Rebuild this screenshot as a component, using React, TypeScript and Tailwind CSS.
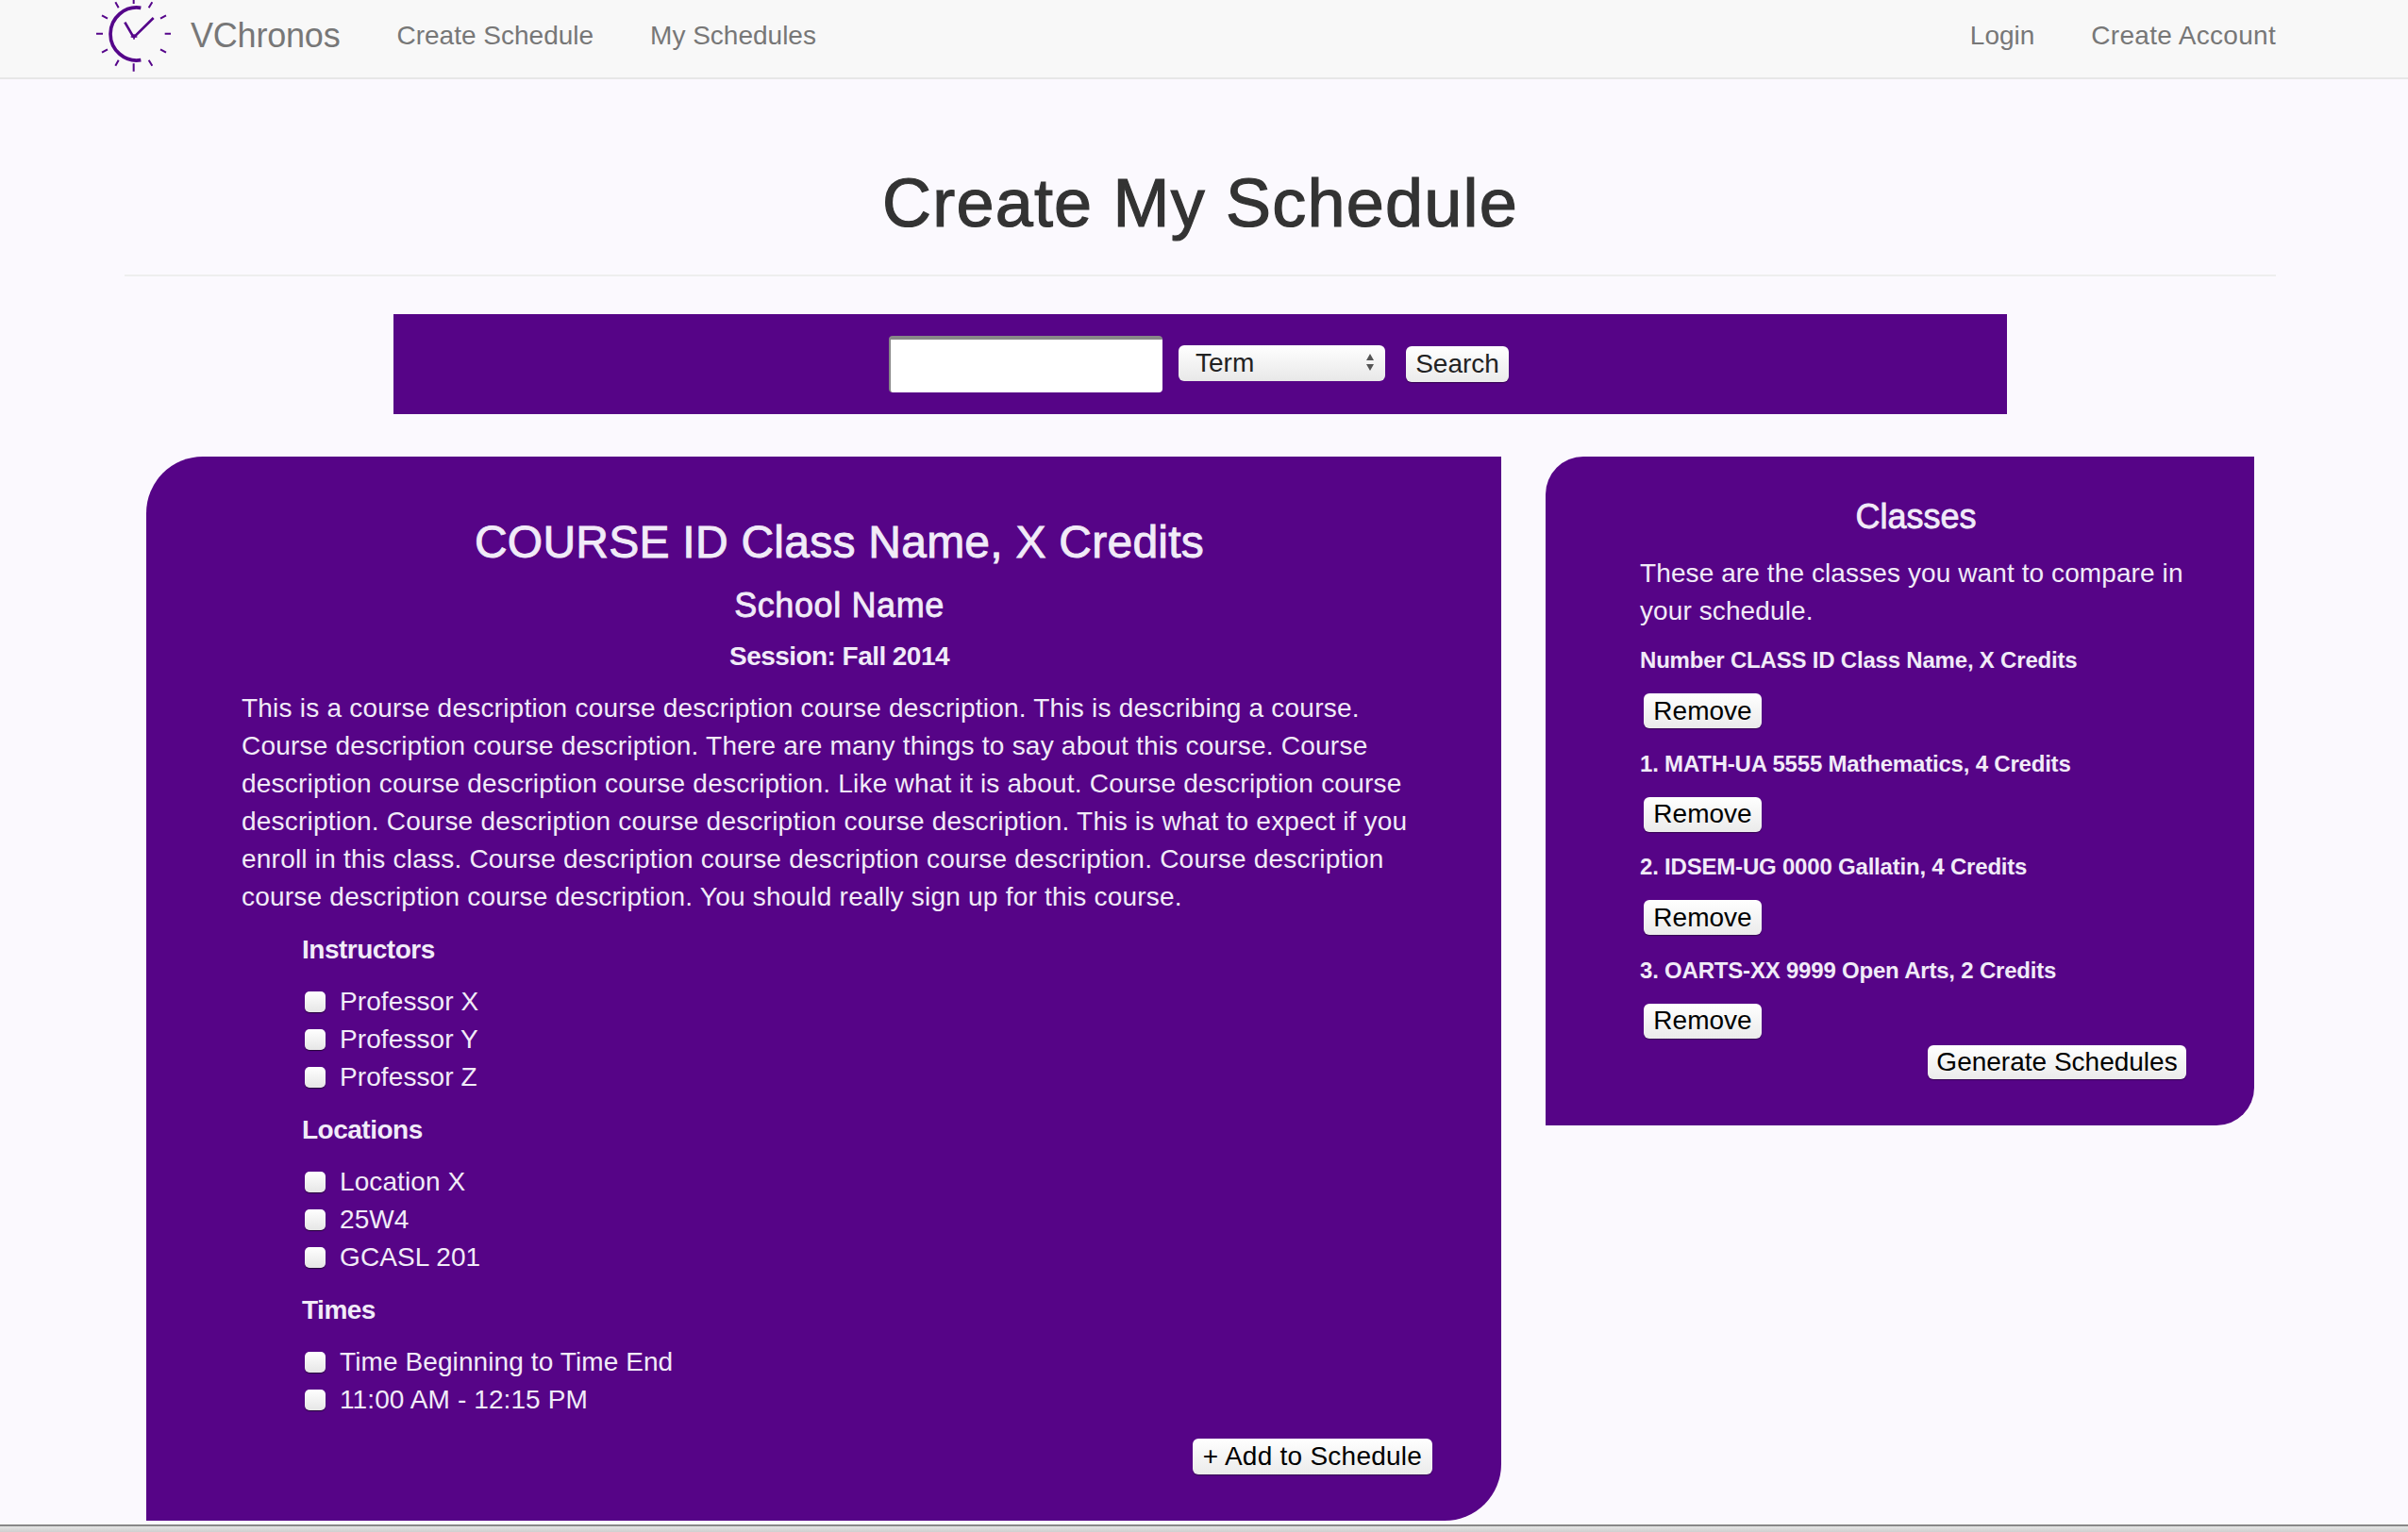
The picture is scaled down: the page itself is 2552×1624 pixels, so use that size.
import React from 'react';

const instructors = ['Professor X', 'Professor Y', 'Professor Z'];
const locations = ['Location X', '25W4', 'GCASL 201'];
const times = ['Time Beginning to Time End', '11:00 AM - 12:15 PM'];
const classes = [
  'Number CLASS ID Class Name, X Credits',
  '1. MATH-UA 5555 Mathematics, 4 Credits',
  '2. IDSEM-UG 0000 Gallatin, 4 Credits',
  '3. OARTS-XX 9999 Open Arts, 2 Credits',
];

// Clock logo, traced from the navbar
const Logo = () => (
  <svg viewBox="0 0 360 255" className="w-[120px] h-[85px] shrink-0" fill="none" stroke="#55058a">
    <path d="M208 28 A 84 84 0 1 0 208 194" strokeWidth="11" />
    <g strokeWidth="6">
      <path d="M185 0V15M185 205V230M66 110H87M284 110H303" />
      <path d="M127 10L137 28M244 10L233 28M84 52L102 62M288 52L270 62" />
      <path d="M84 170L102 160M288 170L270 160M127 212L137 194M244 212L233 194" />
    </g>
    <path d="M185 122L248 60M185 122L157 74" strokeWidth="8" />
    <path d="M176 120H196M186 112V128" strokeWidth="5" />
  </svg>
);

const Btn = ({ children, className = '' }: { children: React.ReactNode; className?: string }) => (
  <button className={`rounded-[6px] bg-linear-to-b from-white to-[#ebebeb] text-black text-[28px] leading-none shadow-[0_1px_1px_rgba(0,0,0,0.4)] ${className}`}>
    {children}
  </button>
);

const CheckGroup = ({ title, items, top }: { title: string; items: string[]; top: string }) => (
  <>
    <h4 className={`ml-[64px] text-[28px] leading-[40px] font-bold tracking-[-0.5px] ${top}`}>{title}</h4>
    <ul className="ml-[67px] mt-[15px]">
      {items.map((item) => (
        <li key={item} className="flex items-center h-[40px]">
          <input
            type="checkbox"
            className="appearance-none w-[22px] h-[22px] mr-[15px] rounded-[5px] bg-linear-to-b from-white to-[#e6e6e6] shadow-[0_1px_1px_rgba(0,0,0,0.6)]"
          />
          <span className="text-[28px] tracking-[0.1px]">{item}</span>
        </li>
      ))}
    </ul>
  </>
);

export default function App() {
  return (
    <div className="min-h-[1624px] flex flex-col bg-[#fbf9fe] font-['Liberation_Sans',Arial,sans-serif] text-[28px] leading-[40px]">
      {/* Navbar */}
      <nav className="h-[84px] bg-[#f8f8f8] border-b-2 border-[#e7e7e7] flex items-center pl-[80px] pr-[140px] text-[#777777]">
        <Logo />
        <a className="ml-[2px] -mt-[6px] text-[36px] tracking-[-0.2px]">VChronos</a>
        <a className="ml-[60px] -mt-[6px]">Create Schedule</a>
        <a className="ml-[60px] -mt-[6px]">My Schedules</a>
        <a className="ml-auto -mt-[6px]">Login</a>
        <a className="ml-[60px] -mt-[6px] tracking-[0.3px]">Create Account</a>
      </nav>

      <main className="w-[2544px]">
        <h1 className="mt-[91px] text-center text-[72px] leading-[80px] tracking-[1.2px] [-webkit-text-stroke:1.2px_#333333] text-[#333333]">
          Create My Schedule
        </h1>
        <hr className="mt-[36px] mx-[132px] border-t-2 border-[#eeeeee]" />

        {/* Search bar */}
        <div className="mt-[40px] mx-auto w-[1710px] h-[106px] bg-[#560487] flex items-center justify-center pr-[3px]">
          <input className="w-[290px] h-[60px] bg-white rounded-[4px] border-t-4 border-l-2 border-[#888888]" />
          <div className="relative ml-[17px] -mt-[2px]">
            <select className="appearance-none w-[219px] h-[38px] pl-[18px] rounded-[6px] bg-linear-to-b from-white to-[#e8e8e8] text-[#222222] text-[28px] leading-none">
              <option>Term</option>
            </select>
            <svg viewBox="0 0 10 20" className="absolute right-[11px] top-[9px] w-[10px] h-[20px]" fill="#555555">
              <path d="M5 1L9 8H1ZM5 19L1 12H9Z" />
            </svg>
          </div>
          <Btn className="ml-[22px] w-[109px] h-[38px] !text-[#222222] -mt-[1px]">Search</Btn>
        </div>

        <div className="mt-[45px] ml-[155px] flex items-start gap-[47px] text-[#f1ebf8]">
          {/* Course panel */}
          <section className="w-[1436px] bg-[#560487] rounded-tl-[60px] rounded-br-[60px] pt-[59px] pb-[49px] pl-[101px] pr-[68px]">
            <h2 className="text-center text-[48px] leading-[64px] tracking-[0.25px] [-webkit-text-stroke:0.9px_#f1ebf8]">
              COURSE ID Class Name, X Credits
            </h2>
            <h3 className="mt-[10px] text-center text-[36px] leading-[50px] tracking-[0.6px] [-webkit-text-stroke:0.8px_#f1ebf8]">
              School Name
            </h3>
            <h4 className="mt-[9px] text-center font-bold tracking-[-0.55px]">Session: Fall 2014</h4>
            <p className="mt-[15px] tracking-[0.22px]">
              This is a course description course description course description. This is describing a course.
              <br />
              Course description course description. There are many things to say about this course. Course
              <br />
              description course description course description. Like what it is about. Course description course
              <br />
              description. Course description course description course description. This is what to expect if you
              <br />
              enroll in this class. Course description course description course description. Course description
              <br />
              course description course description. You should really sign up for this course.
            </p>
            <CheckGroup title="Instructors" items={instructors} top="mt-[16px]" />
            <CheckGroup title="Locations" items={locations} top="mt-[16px]" />
            <CheckGroup title="Times" items={times} top="mt-[16px]" />
            <div className="mt-[21px] flex justify-end pr-[5px]">
              <Btn className="w-[254px] h-[38px] tracking-[0.25px]">+ Add to Schedule</Btn>
            </div>
          </section>

          {/* Classes panel */}
          <aside className="w-[751px] bg-[#560487] rounded-tl-[40px] rounded-br-[40px] pt-[39px] pb-[49px] pl-[100px] pr-[66px]">
            <h3 className="text-center text-[36px] leading-[50px] [-webkit-text-stroke:0.8px_#f1ebf8]">Classes</h3>
            <p className="mt-[15px] tracking-[0.1px]">These are the classes you want to compare in your schedule.</p>
            <div className="mt-[15px]">
              {classes.map((name) => (
                <div key={name} className="h-[109.5px]">
                  <h5 className="text-[24px] leading-[34px] font-bold tracking-[-0.2px]">{name}</h5>
                  <Btn className="mt-[18px] ml-[4px] w-[125px] h-[37px]">Remove</Btn>
                </div>
              ))}
            </div>
            <div className="-mt-[13px] flex justify-end pr-[6px]">
              <Btn className="w-[274px] h-[36px]">Generate Schedules</Btn>
            </div>
          </aside>
        </div>
      </main>

      {/* Window edge at the bottom of the capture */}
      <div className="mt-auto h-[8px] border-t-2 border-[#888888] bg-linear-to-b from-[#e4e4e4] to-[#cfcfcf]" />
    </div>
  );
}
